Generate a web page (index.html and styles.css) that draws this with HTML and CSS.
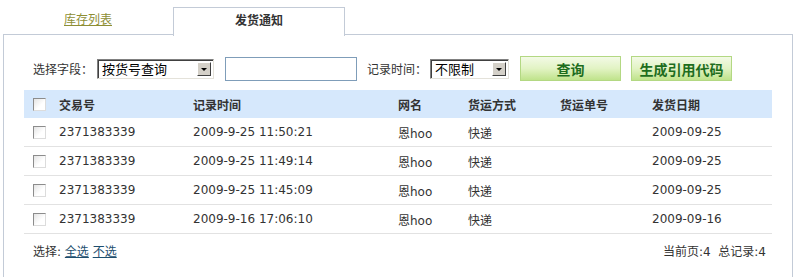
FILE: index.html
```html
<!DOCTYPE html>
<html lang="zh-CN">
<head>
    <meta charset="UTF-8">
    <title>发货通知</title>
    <link rel="stylesheet" href="styles.css">
</head>
<body>
    <div class="tabs">
        <div class="tab"><a href="#">库存列表</a></div>
        <div class="tab active">发货通知</div>
    </div>

    <div class="panel">
        <div class="search-row">
            <span class="label">选择字段：</span>
            <div class="combo combo-field">
                <span class="combo-text">按货号查询</span>
                <span class="combo-arrow"></span>
            </div>
            <input type="text" class="keyword">
            <span class="label label-time">记录时间：</span>
            <div class="combo combo-time">
                <span class="combo-text">不限制</span>
                <span class="combo-arrow"></span>
            </div>
            <button class="btn btn-query">查询</button>
            <button class="btn btn-code">生成引用代码</button>
        </div>

        <table class="list">
            <colgroup>
                <col style="width: 35px">
                <col style="width: 134px">
                <col style="width: 205px">
                <col style="width: 70px">
                <col style="width: 92px">
                <col style="width: 92px">
                <col style="width: 120px">
            </colgroup>
            <thead>
                <tr>
                    <th class="check"><span class="cb"></span></th>
                    <th>交易号</th>
                    <th>记录时间</th>
                    <th>网名</th>
                    <th>货运方式</th>
                    <th>货运单号</th>
                    <th>发货日期</th>
                </tr>
            </thead>
            <tbody>
                <tr>
                    <td class="check"><span class="cb"></span></td>
                    <td>2371383339</td>
                    <td>2009-9-25 11:50:21</td>
                    <td>恩hoo</td>
                    <td>快递</td>
                    <td></td>
                    <td>2009-09-25</td>
                </tr>
                <tr>
                    <td class="check"><span class="cb"></span></td>
                    <td>2371383339</td>
                    <td>2009-9-25 11:49:14</td>
                    <td>恩hoo</td>
                    <td>快递</td>
                    <td></td>
                    <td>2009-09-25</td>
                </tr>
                <tr>
                    <td class="check"><span class="cb"></span></td>
                    <td>2371383339</td>
                    <td>2009-9-25 11:45:09</td>
                    <td>恩hoo</td>
                    <td>快递</td>
                    <td></td>
                    <td>2009-09-25</td>
                </tr>
                <tr>
                    <td class="check"><span class="cb"></span></td>
                    <td>2371383339</td>
                    <td>2009-9-16 17:06:10</td>
                    <td>恩hoo</td>
                    <td>快递</td>
                    <td></td>
                    <td>2009-09-16</td>
                </tr>
            </tbody>
        </table>

        <div class="footer">
            <div>选择: <a href="#">全选</a> <a href="#">不选</a></div>
            <div>当前页:4&nbsp; 总记录:4</div>
        </div>
    </div>
</body>
</html>
```

FILE: styles.css
```css
body {
    margin: 0;
    font-family: "DejaVu Sans", "Noto Sans CJK SC", sans-serif;
    font-size: 12px;
    color: #333;
    background: #fff;
}

/* tabs */
.tabs {
    display: flex;
    align-items: flex-start;
    height: 27px;
    padding: 7px 0 0 3px;
}

.tab {
    width: 170px;
    line-height: 26px;
    text-align: center;
}

.tab a {
    color: #8e8e34;
}

.tab.active {
    position: relative;
    z-index: 1;
    height: 28px;
    border: 1px solid #c3cbd7;
    border-bottom: none;
    background: #fff;
    font-weight: bold;
}

/* panel */
.panel {
    margin: 0 2px 0 3px;
    min-height: 221px;
    padding: 21px 20px 0;
    border: 1px solid #c3cbd7;
    border-bottom: none;
}

.search-row {
    display: flex;
    align-items: center;
    height: 25px;
    padding-left: 9px;
}

.label {
    white-space: nowrap;
}

.label-time {
    margin-left: 10px;
}

.combo {
    display: flex;
    align-items: center;
    box-sizing: border-box;
    height: 20px;
    margin-left: 4px;
    padding: 0 2px 0 4px;
    border-top: 1px solid #808080;
    border-left: 1px solid #808080;
    border-right: 1px solid #e4e2da;
    border-bottom: 1px solid #e4e2da;
    box-shadow: inset 1px 1px 0 #404040;
    background: #fff;
    font-size: 13px;
    color: #000;
}

.combo-field {
    width: 117px;
}

.combo-time {
    width: 79px;
    margin-left: 3px;
}

.combo-text {
    flex: 1;
    white-space: nowrap;
}

.combo-arrow {
    position: relative;
    width: 12px;
    height: 12px;
    margin-top: 1px;
    border: 1px solid;
    border-color: #fff #404040 #404040 #fff;
    background: #d4d0c8;
}

.combo-arrow::after {
    content: "";
    position: absolute;
    left: 3px;
    top: 5px;
    border-left: 3px solid transparent;
    border-right: 3px solid transparent;
    border-top: 3px solid #000;
}

.keyword {
    box-sizing: border-box;
    width: 132px;
    height: 24px;
    margin: 0 0 0 11px;
    border: 1px solid #7f9db9;
    background: #fff;
}

.btn {
    box-sizing: border-box;
    width: 101px;
    height: 25px;
    padding: 0;
    border: 1px solid #b3d883;
    background: linear-gradient(#f3fae6, #e2f3c4 50%, #bfe38b);
    font-family: "DejaVu Sans", "Noto Sans CJK SC", sans-serif;
    font-size: 14px;
    font-weight: bold;
    color: #1e6d1e;
    cursor: pointer;
}

.btn-query {
    margin-left: 11px;
}

.btn-code {
    margin-left: 10px;
}

/* list */
.list {
    width: 748px;
    margin-top: 9px;
    border-collapse: collapse;
    table-layout: fixed;
}

.list th,
.list td {
    padding: 0;
    text-align: left;
    white-space: nowrap;
}

.list th {
    height: 28px;
    background: #d6e8fc;
    font-weight: bold;
}

.list td {
    height: 28px;
    border-bottom: 1px solid #e2e2e2;
}

.list .check {
    padding-left: 9px;
}

.cb {
    display: inline-block;
    box-sizing: border-box;
    width: 13px;
    height: 13px;
    vertical-align: middle;
    border: 1px solid;
    border-color: #8c8c8c #dcdcdc #dcdcdc #8c8c8c;
    background: linear-gradient(135deg, #e4e4e4, #fff 60%);
}

.footer {
    display: flex;
    justify-content: space-between;
    align-items: center;
    height: 32px;
    padding: 0 6px 0 9px;
}

.footer a {
    color: #1d4e6e;
}
```
